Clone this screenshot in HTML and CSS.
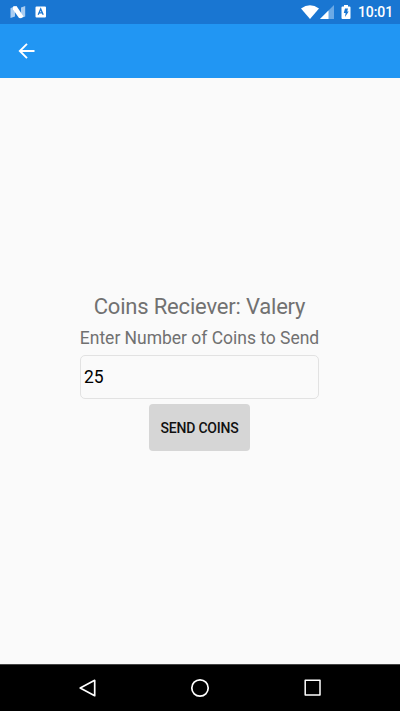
FILE: index.html
```html
<!DOCTYPE html>
<html lang="en">
<head>
<meta charset="utf-8">
<title>Send Coins</title>
<link rel="stylesheet" href="styles.css">
</head>
<body>
<div class="screen">
  <header class="status-bar">
    <svg class="status-n" viewBox="0 0 16 14"><path d="M.5 3.200 5 1v10.500L.5 13zM11 2.500 15.200 1v10.500L11 13z" fill="#a9cdf1"/><path d="M3 1.500 6.500 1l7 10.500-2.500 1.700-2-.2L3 4.500z" fill="#fff"/></svg>
    <svg class="status-a" viewBox="0 0 12 12"><path fill="#fff" d="M1.500.5h8.500a1 1 0 0 1 1 1v9a1 1 0 0 1-1 1H1.500a1 1 0 0 1-1-1v-9a1 1 0 0 1 1-1z"/><path d="M3.200 8.800 5.700 3l2.500 5.800M4.200 6.900h3" fill="none" stroke="#1976d2" stroke-width="1.300"/></svg>
    <span class="spacer"></span>
    <svg class="status-wifi" viewBox="0 0 18 14"><path fill="#fff" d="M0 3.500Q9-3.200 18 3.500L9 14z"/></svg>
    <svg class="status-signal" viewBox="0 0 14 14"><path fill="#6ca9e5" d="M14 0v14H0z"/><path fill="#fff" d="M8.500 5.500V14H0z"/></svg>
    <svg class="status-battery" viewBox="0 0 10 14"><path fill="#fff" d="M3 0h4v1.500h1.500q1 0 1 1V13q0 1-1 1h-7q-1 0-1-1V2.500q0-1 1-1H3z"/><path fill="#1976d2" d="M4 3.500h3L6.200 6.500h1.500L4 12l.6-4H2.800z"/></svg>
    <span class="clock">10:01</span>
  </header>
  <nav class="app-bar">
    <svg class="back-arrow" viewBox="0 0 18 18"><path d="M16.500 9H2M9 1.800 1.800 9 9 16.200" fill="none" stroke="#fff" stroke-width="1.900"/></svg>
  </nav>
  <main class="content">
    <h1 class="receiver">Coins Reciever: Valery</h1>
    <label class="prompt" for="amount">Enter Number of Coins to Send</label>
    <input class="amount" id="amount" type="text" value="25">
    <button class="send">SEND COINS</button>
  </main>
  <footer class="nav-bar">
    <svg class="nav-icon" viewBox="0 0 20 20"><path d="M17.700 2.300v15.400L3.200 10z" fill="none" stroke="#fff" stroke-width="1.700" stroke-linejoin="round"/></svg>
    <svg class="nav-icon" viewBox="0 0 20 20"><circle cx="10" cy="10" r="8.200" fill="none" stroke="#fff" stroke-width="1.700"/></svg>
    <svg class="nav-icon" viewBox="0 0 20 20"><path d="M2.200 2.200h14.800v14.800h-14.800z" fill="none" stroke="#fff" stroke-width="1.500" stroke-linejoin="round"/></svg>
  </footer>
</div>
</body>
</html>
```
FILE: styles.css
```css
* { box-sizing: border-box; }
body { margin: 0; font-family: Roboto, sans-serif; }
svg { display: block; flex: none; }
.screen { display: flex; flex-direction: column; height: 711px; background: #fafafa; }
.status-bar { display: flex; align-items: center; height: 24px; padding: 0 8px 0 10px; background: #1976d2; color: #fff; }
.status-n { width: 16px; height: 14px; }
.status-a { width: 12px; height: 12px; margin-left: 9px; }
.spacer { flex: 1; }
.status-wifi { width: 18px; height: 14px; }
.status-signal { width: 14px; height: 14px; margin-left: 1px; }
.status-battery { width: 10px; height: 14px; margin-left: 7px; }
.clock { width: 34px; margin-left: 7px; font-size: 14px; font-weight: 500; line-height: 24px; letter-spacing: -0.1px; white-space: nowrap; }
.app-bar { display: flex; align-items: center; height: 54px; padding: 0 0 1px 18px; background: #2196f3; }
.back-arrow { width: 18px; height: 18px; }
.content { display: flex; flex: 1; flex-direction: column; align-items: center; padding: 213px 1px 0 0; }
.receiver { margin: 0; color: #717171; font-size: 22px; font-weight: 400; line-height: 32px; letter-spacing: -0.19px; white-space: nowrap; }
.prompt { color: #717171; font-size: 17.5px; line-height: 31px; letter-spacing: -0.02px; white-space: nowrap; }
.amount { width: 239px; height: 44px; margin-top: 1px; padding: 0 3px; border: 1px solid #e2e2e2; border-radius: 5px; background: #fafafa; color: #000; font: 17.5px Roboto, sans-serif; outline: none; }
.send { width: 101px; height: 47px; margin-top: 5px; padding: 0; border: 0; border-radius: 4px; background: #d6d6d6; color: #111; font: 500 14px Roboto, sans-serif; letter-spacing: -0.2px; white-space: nowrap; }
.nav-bar { display: flex; justify-content: center; gap: 93px; align-items: center; height: 47px; border-top: 1px solid #444; background: #000; }
.nav-icon { width: 20px; height: 20px; }
```
